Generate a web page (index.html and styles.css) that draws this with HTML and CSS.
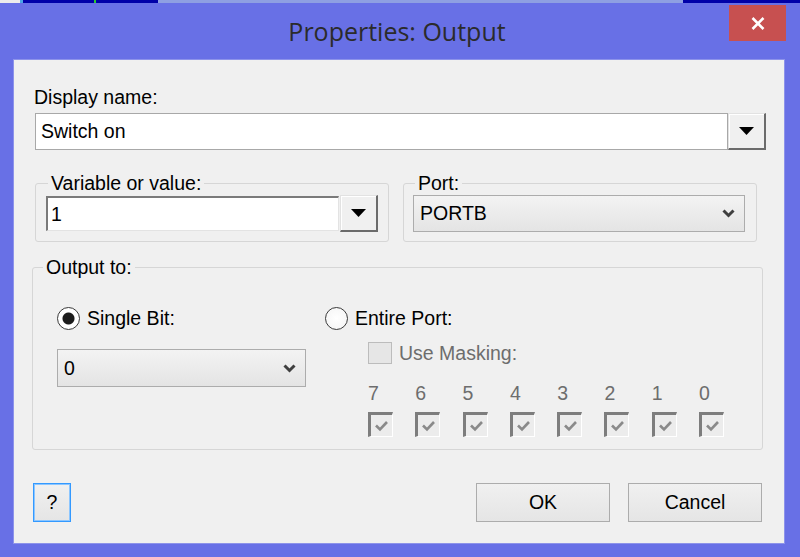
FILE: index.html
```html
<!DOCTYPE html>
<html lang="en">
<head>
  <meta charset="UTF-8" />
  <title>Properties: Output</title>
  <meta name="viewport" content="width=device-width, initial-scale=1.0">
  <link rel="stylesheet" href="styles.css">
</head>
<body>

  <!-- strip of the window behind -->
  <div class="backstrip">
    <span class="seg s1"></span>
    <span class="seg s2"></span>
    <span class="seg s3"></span>
    <span class="seg s4"></span>
    <span class="seg s5"></span>
    <span class="seg s6"></span>
    <span class="seg s7"></span>
  </div>

  <div class="window">
    <div class="titlebar">
      <span></span>
      <div class="title">Properties: Output</div>
      <button class="close" title="Close">
        <svg width="14" height="13" viewBox="0 0 14 13">
          <path d="M1.5 1 L12.5 12 M12.5 1 L1.5 12" stroke="#fff" stroke-width="2.6" fill="none" />
        </svg>
      </button>
    </div>

    <div class="client">
      <div class="label">Display name:</div>
      <div class="combo display-combo">
        <div class="edit flat">Switch on</div>
        <div class="dropbtn">
          <svg width="15" height="8" viewBox="0 0 15 8"><polygon points="0,0 15,0 7.5,8" fill="#000" /></svg>
        </div>
      </div>

      <div class="group-row">
        <fieldset class="group var-group">
          <legend>Variable or value:</legend>
          <div class="combo">
            <div class="edit sunken">1</div>
            <div class="dropbtn">
              <svg width="15" height="8" viewBox="0 0 15 8"><polygon points="0,0 15,0 7.5,8" fill="#000" /></svg>
            </div>
          </div>
        </fieldset>

        <fieldset class="group port-group">
          <legend>Port:</legend>
          <div class="select port-select">
            <span>PORTB</span>
            <svg width="13" height="9" viewBox="0 0 13 9"><path d="M1.5 1.5 L6.5 6.5 L11.5 1.5" stroke="#3f3f3f" stroke-width="3" fill="none" /></svg>
          </div>
        </fieldset>
      </div>

      <fieldset class="group output-group">
        <legend>Output to:</legend>
        <div class="output-grid">
          <div class="col">
            <div class="radio-row"><span class="radio checked"></span>Single Bit:</div>
            <div class="select bit-select">
              <span>0</span>
              <svg width="13" height="9" viewBox="0 0 13 9"><path d="M1.5 1.5 L6.5 6.5 L11.5 1.5" stroke="#3f3f3f" stroke-width="3" fill="none" /></svg>
            </div>
          </div>

          <div class="col">
            <div class="radio-row"><span class="radio"></span>Entire Port:</div>
            <div class="masking">
              <div class="check-row disabled"><span class="checkbox"></span>Use Masking:</div>
              <div class="bits">
                <div class="bit"><span class="bit-num">7</span><span class="bitbox"><svg width="15" height="12" viewBox="0 0 15 12"><path d="M2 5.5 L6 9.5 L13 2" stroke="#8a8a8a" stroke-width="2.6" fill="none" /></svg></span></div>
                <div class="bit"><span class="bit-num">6</span><span class="bitbox"><svg width="15" height="12" viewBox="0 0 15 12"><path d="M2 5.5 L6 9.5 L13 2" stroke="#8a8a8a" stroke-width="2.6" fill="none" /></svg></span></div>
                <div class="bit"><span class="bit-num">5</span><span class="bitbox"><svg width="15" height="12" viewBox="0 0 15 12"><path d="M2 5.5 L6 9.5 L13 2" stroke="#8a8a8a" stroke-width="2.6" fill="none" /></svg></span></div>
                <div class="bit"><span class="bit-num">4</span><span class="bitbox"><svg width="15" height="12" viewBox="0 0 15 12"><path d="M2 5.5 L6 9.5 L13 2" stroke="#8a8a8a" stroke-width="2.6" fill="none" /></svg></span></div>
                <div class="bit"><span class="bit-num">3</span><span class="bitbox"><svg width="15" height="12" viewBox="0 0 15 12"><path d="M2 5.5 L6 9.5 L13 2" stroke="#8a8a8a" stroke-width="2.6" fill="none" /></svg></span></div>
                <div class="bit"><span class="bit-num">2</span><span class="bitbox"><svg width="15" height="12" viewBox="0 0 15 12"><path d="M2 5.5 L6 9.5 L13 2" stroke="#8a8a8a" stroke-width="2.6" fill="none" /></svg></span></div>
                <div class="bit"><span class="bit-num">1</span><span class="bitbox"><svg width="15" height="12" viewBox="0 0 15 12"><path d="M2 5.5 L6 9.5 L13 2" stroke="#8a8a8a" stroke-width="2.6" fill="none" /></svg></span></div>
                <div class="bit"><span class="bit-num">0</span><span class="bitbox"><svg width="15" height="12" viewBox="0 0 15 12"><path d="M2 5.5 L6 9.5 L13 2" stroke="#8a8a8a" stroke-width="2.6" fill="none" /></svg></span></div>
              </div>
            </div>
          </div>
        </div>
      </fieldset>

      <div class="buttons">
        <button class="btn help">?</button>
        <span class="spacer"></span>
        <button class="btn">OK</button>
        <button class="btn">Cancel</button>
      </div>
    </div>
  </div>

</body>
</html>
```

FILE: styles.css
```css
html, body {
  margin: 0;
  padding: 0;
  height: 557px;
  overflow: hidden;
}

body {
  background: #6870e6;
  font-family: "Liberation Sans", Arial, sans-serif;
  font-size: 19.5px;
  color: #000;
}

/* window behind the dialog */
.backstrip {
  display: flex;
  height: 3px;
}

.seg { display: block; height: 3px; }
.s1 { width: 20px; background: #ececec; }
.s2 { width: 3px; background: #4aa6e6; }
.s3 { width: 71px; background: #0000a8; }
.s4 { width: 2px; background: #2ccc2c; }
.s5 { width: 62px; background: #0000a8; }
.s6 { width: 525px; background: #8e9fe2; }
.s7 { width: 117px; background: #0000a8; }

.window {
  padding: 0 15px 13px 13px;
}

.titlebar {
  height: 56px;
  display: grid;
  grid-template-columns: 1fr auto 1fr;
  align-items: center;
}

.title {
  font-family: "Open Sans", "Liberation Sans", sans-serif;
  font-size: 25px;
  color: #2b2b2b;
  margin-left: -4px;
}

.close {
  justify-self: end;
  align-self: start;
  margin-top: 2px;
  margin-right: -1px;
  width: 57px;
  height: 36px;
  border: 0;
  padding: 0;
  background: #c75050;
  display: flex;
  align-items: center;
  justify-content: center;
}

.client {
  background: #f0f0f0;
  border: 1px solid #8d93ea;
  padding: 26px 0 21px 0;
}

.label {
  line-height: 22px;
  padding-left: 20px;
}

.combo {
  display: flex;
  align-items: center;
  height: 37px;
}

.display-combo {
  margin: 5px 0 0 21px;
  width: 731px;
}

.edit {
  box-sizing: border-box;
  background: #fff;
  display: flex;
  align-items: center;
  padding-left: 5px;
}

.edit.flat {
  width: 693px;
  height: 37px;
  border: 1px solid #a8a8a8;
}

.edit.sunken {
  width: 293px;
  height: 35px;
  border-top: 2px solid #7a7a7a;
  border-left: 2px solid #7a7a7a;
  border-right: 1px solid #e3e3e3;
  border-bottom: 1px solid #e3e3e3;
  padding-left: 3px;
}

.dropbtn {
  box-sizing: border-box;
  width: 38px;
  height: 37px;
  background: #f0f0f0;
  border-top: 1px solid #e2e2e2;
  border-left: 1px solid #e2e2e2;
  border-right: 2px solid #6b6b6b;
  border-bottom: 2px solid #6b6b6b;
  box-shadow: inset 1px 1px 0 #fff;
  display: flex;
  align-items: center;
  justify-content: center;
}

.var-group .dropbtn {
  margin-left: 1px;
}

.group-row {
  display: flex;
  gap: 14px;
  margin: 22px 0 0 21px;
}

.group {
  margin: 0;
  border: 1px solid #d6d6d6;
  border-radius: 3px;
  box-sizing: border-box;
  min-width: 0;
}

.group legend {
  padding: 0 3px;
  margin-left: 2px;
  line-height: 22px;
}

.var-group,
.port-group {
  width: 354px;
  padding: 1px 10px 9px 10px;
}

.port-group {
  padding-left: 9px;
}

.select {
  box-sizing: border-box;
  border: 1px solid #acacac;
  background: linear-gradient(#f3f3f3, #e4e4e4);
  display: flex;
  align-items: center;
  justify-content: space-between;
  padding: 0 9px 0 6px;
}

.port-select {
  width: 332px;
  height: 37px;
}

.output-group {
  width: 731px;
  margin: 14px 0 0 18px;
  padding: 28px 0 12px 10px;
}

.output-group legend {
  margin-left: 0;
}

.output-grid {
  display: grid;
  grid-template-columns: 268px 1fr;
  padding-left: 14px;
}

.radio-row {
  display: flex;
  align-items: center;
  gap: 7px;
  height: 24px;
}

.radio {
  box-sizing: border-box;
  width: 23px;
  height: 23px;
  border-radius: 50%;
  border: 1px solid #3a3a3a;
  background: radial-gradient(circle, #fff 0, #f4f4f4 100%);
}

.radio.checked {
  background: radial-gradient(circle, #1c1c1c 0 5.5px, #fff 6.5px);
}

.bit-select {
  margin-top: 19px;
  width: 249px;
  height: 38px;
}

.masking {
  padding-left: 43px;
}

.check-row {
  display: flex;
  align-items: center;
  gap: 7px;
  height: 22px;
  margin-top: 12px;
}

.disabled {
  color: #6d6d6d;
}

.checkbox {
  box-sizing: border-box;
  width: 24px;
  height: 22px;
  border: 1px solid #bcbcbc;
  background: #e6e6e6;
}

.bits {
  display: grid;
  grid-template-columns: repeat(8, 47.3px);
  margin-top: 18px;
}

.bit {
  display: flex;
  flex-direction: column;
}

.bit-num {
  line-height: 22px;
  color: #6d6d6d;
}

.bitbox {
  box-sizing: border-box;
  margin-top: 8px;
  width: 25px;
  height: 25px;
  border-top: 3px solid #7d7d7d;
  border-left: 3px solid #7d7d7d;
  border-right: 1px solid #fff;
  border-bottom: 1px solid #fff;
  background: #ececec;
  display: flex;
  align-items: center;
  justify-content: center;
}

.buttons {
  display: flex;
  gap: 18px;
  margin-top: 33px;
  padding: 0 22px 0 19px;
}

.spacer {
  flex: 1;
}

.btn {
  box-sizing: border-box;
  width: 134px;
  height: 39px;
  border: 1px solid #acacac;
  background: linear-gradient(#f0f0f0, #e5e5e5);
  font-family: "Liberation Sans", Arial, sans-serif;
  font-size: 19.5px;
  color: #000;
  padding: 0;
}

.btn.help {
  width: 38px;
  border: 1px solid #3399ff;
  box-shadow: inset 0 0 0 1px #8cc6ff;
}
```
